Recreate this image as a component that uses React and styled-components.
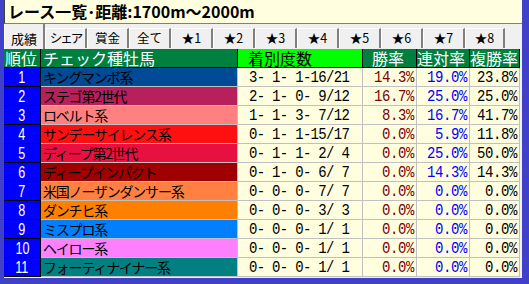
import React from 'react';
import styled, { createGlobalStyle } from 'styled-components';

const Global = createGlobalStyle`
  html, body { margin: 0; padding: 0; background: #4040c8; }
  body { width: 529px; height: 284px; overflow: hidden; }
`;

const JP = '"Noto Sans CJK JP", "Noto Sans", sans-serif';
const MONO = '"Liberation Mono", "DejaVu Sans Mono", monospace';

const Window = styled.div`
  margin-left: 4px;
  width: 518px;
  background: #f0f0f0;
  display: flex;
  flex-direction: column;
  padding-bottom: 1px;
`;

const Title = styled.div`
  box-sizing: border-box;
  height: 24px;
  background: #ffffe0;
  border-left: 1px solid #404040;
  border-bottom: 1px solid #808080;
  padding-left: 3px;
  font-family: ${JP};
  font-weight: bold;
  font-size: 16px;
  line-height: 23px;
  color: #000;
  white-space: nowrap;
`;

const TabBar = styled.div`
  box-sizing: border-box;
  display: flex;
  align-items: flex-end;
  height: 25px;
  border-left: 1px solid #fff;
  background: #f0f0f0;
`;

const Tab = styled.div`
  box-sizing: border-box;
  width: ${p => p.$w}px;
  height: ${p => (p.$active ? 25 : 20)}px;
  margin-bottom: ${p => (p.$active ? 0 : 1)}px;
  border-top: ${p => (p.$active ? 'none' : '1px solid #fff')};
  border-left: ${p => (p.$active ? 'none' : '1px solid #fff')};
  border-right: 2px solid #808080;
  display: flex;
  align-items: center;
  justify-content: center;
  font-family: ${JP};
  font-size: ${p => (p.$active ? 13 : 12.5)}px;
  line-height: 1;
  letter-spacing: ${p => (p.$tight ? '-2px' : '0')};
  padding-top: ${p => (p.$active ? 3 : 0)}px;
  color: #000;
  white-space: nowrap;
`;

const Table = styled.div`
  display: grid;
  grid-template-columns: 37px 197px 125px 54px 53px 50px;
  grid-auto-rows: 19px;
`;

const Cell = styled.div`
  box-sizing: border-box;
  display: flex;
  align-items: center;
  overflow: hidden;
  white-space: nowrap;
  line-height: 1;
  border-right: 1px solid ${p => p.$line || '#c0c0c0'};
  border-bottom: 1px solid ${p => p.$line || '#c0c0c0'};
  background: ${p => p.$bg || '#ffffe0'};
  color: ${p => p.$fg || '#000'};
`;

const HeadCell = styled(Cell)`
  font-family: ${JP};
  font-size: 16px;
  padding-left: ${p => p.$pad || 0}px;
`;

const RankCell = styled(Cell)`
  justify-content: center;
  font-family: "Liberation Sans", sans-serif;
  font-size: 17px;
`;

const RankNum = styled.span`
  display: inline-block;
  transform: scaleX(0.74);
`;

const NameCell = styled(Cell)`
  font-family: ${JP};
  font-size: 14px;
  letter-spacing: -1.2px;
  padding-left: 2px;
`;

const DataCell = styled(Cell)`
  font-family: ${MONO};
  font-size: 14px;
  letter-spacing: ${p => (p.$right ? '-0.4px' : '-0.7px')};
  justify-content: ${p => (p.$right ? 'flex-end' : 'flex-start')};
  padding-left: ${p => (p.$right ? 0 : 11)}px;
  padding-right: ${p => (p.$right ? 2 : 0)}px;
  white-space: pre;
`;

const Txt = styled.span`
  display: inline-block;
  transform: scaleY(1.2);
`;

const tabs = ['シェア', '賞金', '全て', '★1', '★2', '★3', '★4', '★5', '★6', '★7', '★8'];

const rows = [
  { name: 'キングマンボ系', color: '#004a96', rec: '3- 1- 1-16/21', win: '14.3%', ren: '19.0%', fuku: '23.8%' },
  { name: 'ステゴ第2世代', color: '#b8205c', rec: '2- 1- 0- 9/12', win: '16.7%', ren: '25.0%', fuku: '25.0%' },
  { name: 'ロベルト系', color: '#ff8080', rec: '1- 1- 3- 7/12', win: '8.3%', ren: '16.7%', fuku: '41.7%' },
  { name: 'サンデーサイレンス系', color: '#ff1010', rec: '0- 1- 1-15/17', win: '0.0%', ren: '5.9%', fuku: '11.8%' },
  { name: 'ディープ第2世代', color: '#e81040', rec: '0- 1- 1- 2/ 4', win: '0.0%', ren: '25.0%', fuku: '50.0%' },
  { name: 'ディープインパクト', color: '#a00000', rec: '0- 1- 0- 6/ 7', win: '0.0%', ren: '14.3%', fuku: '14.3%' },
  { name: '米国ノーザンダンサー系', color: '#ff8040', rec: '0- 0- 0- 7/ 7', win: '0.0%', ren: '0.0%', fuku: '0.0%' },
  { name: 'ダンチヒ系', color: '#ff8000', rec: '0- 0- 0- 3/ 3', win: '0.0%', ren: '0.0%', fuku: '0.0%' },
  { name: 'ミスプロ系', color: '#0080ff', rec: '0- 0- 0- 1/ 1', win: '0.0%', ren: '0.0%', fuku: '0.0%' },
  { name: 'ヘイロー系', color: '#ff80ff', rec: '0- 0- 0- 1/ 1', win: '0.0%', ren: '0.0%', fuku: '0.0%' },
  { name: 'フォーティナイナー系', color: '#008080', rec: '0- 0- 0- 1/ 1', win: '0.0%', ren: '0.0%', fuku: '0.0%' },
];

const GREEN = '#00803f';

export default function App() {
  return (
    <>
      <Global />
      <Window>
        <Title>レース一覧･距離:1700m～2000m</Title>
        <TabBar>
          <Tab $active $w={40}>成績</Tab>
          {tabs.map((t, i) => (
            <Tab key={t} $w={i === 10 ? 40 : 42} $tight={t === 'シェア'}>{t}</Tab>
          ))}
        </TabBar>
        <Table>
          <HeadCell $bg={GREEN} $fg="#fff" $line="#000" $pad={1}>順位</HeadCell>
          <HeadCell $bg={GREEN} $fg="#fff" $line="#000" $pad={2}>チェック種牡馬</HeadCell>
          <HeadCell $bg="#00ff00" $fg="#000" $line="#000" $pad={10}>着別度数</HeadCell>
          <HeadCell $bg={GREEN} $fg="#fff" $line="#000" $pad={9}>勝率</HeadCell>
          <HeadCell $bg={GREEN} $fg="#fff" $line="#000">連対率</HeadCell>
          <HeadCell $bg={GREEN} $fg="#fff" $line="#000">複勝率</HeadCell>
          {rows.map((r, i) => (
            <React.Fragment key={r.name}>
              <RankCell $bg="#0000ff" $fg="#fff" $line="#000"><RankNum>{i + 1}</RankNum></RankCell>
              <NameCell $bg={r.color}>{r.name}</NameCell>
              <DataCell><Txt>{r.rec}</Txt></DataCell>
              <DataCell $right $fg="#800000"><Txt>{r.win}</Txt></DataCell>
              <DataCell $right $fg="#0000ff"><Txt>{r.ren}</Txt></DataCell>
              <DataCell $right><Txt>{r.fuku}</Txt></DataCell>
            </React.Fragment>
          ))}
        </Table>
      </Window>
    </>
  );
}
